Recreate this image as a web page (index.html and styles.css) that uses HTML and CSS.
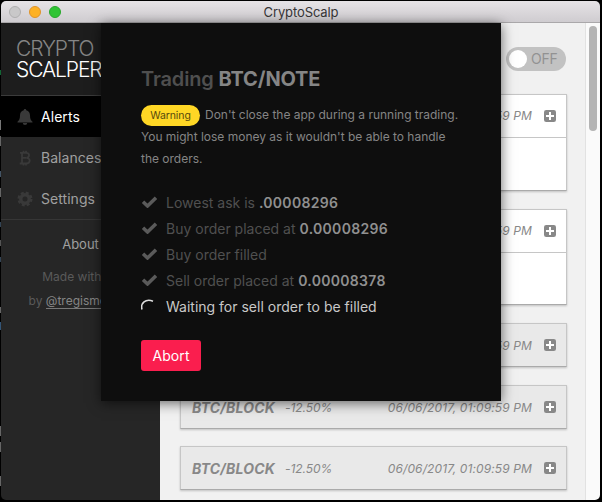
FILE: index.html
```html
<!DOCTYPE html>
<html lang="en">
<head>
<meta charset="utf-8">
<title>CryptoScalp</title>
<link rel="stylesheet" href="styles.css">
</head>
<body>
<svg class="defs" aria-hidden="true">
  <symbol id="check" viewBox="0 0 16 12"><path d="M1.500 5.700 6 10 14.500 1.700" fill="none" stroke="currentColor" stroke-width="3.500"/></symbol>
  <symbol id="plus" viewBox="0 0 12 12"><rect width="12" height="12" rx="2.2" fill="currentColor"/><path d="M6 2v8M2 6h8" stroke="#fff" stroke-width="2"/></symbol>
</svg>
<div class="window">
  <header class="titlebar">
    <div class="lights"><i class="light"></i><i class="light light-min"></i><i class="light light-max"></i></div>
    <span class="window-title">CryptoScalp</span>
  </header>
  <div class="body">
    <aside class="sidebar">
      <div class="logo"><span class="logo-top">CRYPTO</span><span>SCALPER</span></div>
      <nav class="nav">
        <a class="nav-item active"><svg class="nav-icon" viewBox="0 0 16 16"><path d="M8 0c.7 0 1.200.5 1.200 1.200C12 1.800 13 4 13 6.500c0 3.500 1 5 2.500 6.300v.7H.5v-.7C2 11.500 3 10 3 6.500 3 4 4 1.800 6.800 1.200 6.800.5 7.300 0 8 0zM5.800 14h4.400a2.200 2 0 0 1-4.400 0z" fill="currentColor"/></svg><span>Alerts</span></a>
        <a class="nav-item"><svg class="nav-icon" viewBox="0 0 16 16"><path d="M3 2.800h6c4 0 4 4.600.3 5 4.700.2 4.500 5.700-.3 5.700H2.700M5 3v10.500M5 7.900h4M6.500.8v2M9 .8v2M6.500 13.500v2M9 13.500v2" fill="none" stroke="currentColor" stroke-width="1.800"/></svg><span>Balances</span></a>
        <a class="nav-item"><svg class="nav-icon" viewBox="0 0 16 16"><circle cx="8" cy="8" r="4.200" fill="none" stroke="currentColor" stroke-width="3.400"/><circle cx="8" cy="8" r="6.200" fill="none" stroke="currentColor" stroke-width="2.600" stroke-dasharray="2.870 2"/></svg><span>Settings</span></a>
      </nav>
      <footer class="about">
        <a class="about-link">About</a>
        <p class="made">Made with <span class="heart">♥</span></p>
        <p class="made made-by">by <a class="author">@tregismoreira</a></p>
      </footer>
    </aside>
    <main class="main">
      <div class="toolbar"><div class="toggle"><i class="knob"></i><span>OFF</span></div></div>
      <section class="cards">
        <article class="card open"><div class="card-head"><time>06/06/2017, 01:09:59 PM</time><svg class="plus"><use href="#plus"/></svg></div></article>
        <article class="card open second"><div class="card-head"><time>06/06/2017, 01:09:59 PM</time><svg class="plus"><use href="#plus"/></svg></div></article>
        <article class="card"><div class="card-head"><time>06/06/2017, 01:09:59 PM</time><svg class="plus"><use href="#plus"/></svg></div></article>
        <article class="card"><div class="card-head"><b>BTC/BLOCK</b><span class="change">-12.50%</span><time>06/06/2017, 01:09:59 PM</time><svg class="plus"><use href="#plus"/></svg></div></article>
        <article class="card last"><div class="card-head"><b>BTC/BLOCK</b><span class="change">-12.50%</span><time>06/06/2017, 01:09:59 PM</time><svg class="plus"><use href="#plus"/></svg></div></article>
      </section>
    </main>
    <div class="scrollbar"><div class="thumb"></div></div>
    <div class="modal">
      <h1 class="modal-title">Trading <b>BTC/NOTE</b></h1>
      <p class="notice"><span class="badge">Warning</span>Don't close the app during a running trading.<br>You might lose money as it wouldn't be able to handle<br>the orders.</p>
      <ul class="steps">
        <li><svg class="check"><use href="#check"/></svg><span>Lowest ask is <b>.00008296</b></span></li>
        <li><svg class="check"><use href="#check"/></svg><span>Buy order placed at <b>0.00008296</b></span></li>
        <li><svg class="check"><use href="#check"/></svg><span>Buy order filled</span></li>
        <li><svg class="check"><use href="#check"/></svg><span>Sell order placed at <b>0.00008378</b></span></li>
        <li class="waiting"><svg class="spinner" viewBox="0 0 16 16"><path d="M1 11.500C-.7 5.500 4.500 .2 12 3.200" fill="none" stroke="currentColor" stroke-width="1.600"/></svg><span>Waiting for sell order to be filled</span></li>
      </ul>
      <button class="abort">Abort</button>
    </div>
  </div>
</div>
</body>
</html>
```

FILE: styles.css
```css
* { box-sizing: border-box; }
body {
  margin: 0;
  width: 602px;
  height: 502px;
  padding: 1px 2px 2px 1px;
  overflow: hidden;
  font-family: Inter, "Liberation Sans", sans-serif;
  background: linear-gradient(#000 0 70px, #163 70px 75px, #000 75px 120px, #777 120px 130px, #000 130px 136px, #666 136px 146px, #000 146px 171px, #456 171px 177px, #000 177px 188px, #666 188px 197px, #000 197px 222px, #345 222px 227px, #000 227px 240px, #555 240px 246px, #000 246px 257px, #345 257px 262px, #000 262px 307px, #666 307px 313px, #000 313px 322px, #357 322px 330px, #000 330px 426px, #666 426px 436px, #000 436px 442px, #666 442px 452px, #000 452px 476px, #666 476px 486px, #000 486px);
  background-size: 1px 502px;
  background-repeat: no-repeat;
  background-color: #000;
}
p, h1, ul { margin: 0; padding: 0; }
.defs { position: absolute; width: 0; height: 0; }
.window { width: 599px; height: 499px; border-radius: 5px; overflow: hidden; display: flex; flex-direction: column; }
.titlebar {
  height: 22px;
  flex: none;
  display: grid;
  grid-template-columns: 100px 1fr 100px;
  align-items: center;
  background: linear-gradient(#e6e3e6, #cfccd0);
  border-bottom: 1px solid #aaa8aa;
}
.lights { display: flex; gap: 8px; padding-left: 8px; }
.light { width: 12px; height: 12px; border-radius: 50%; background: #c9c8c9; border: 1px solid #b0afb0; }
.light-min { background: #fdb124; border-color: #df932a; }
.light-max { background: #30c435; border-color: #28a72c; }
.window-title { padding-left: 1px; text-align: center; font-size: 13px; letter-spacing: -.1px; color: #373637; }
.body { position: relative; flex: 1; display: flex; min-height: 0; }
.sidebar { width: 159px; flex: none; background: #262626; color: #a0a0a0; }
.logo { height: 73px; padding: 15px 0 0 15px; background: #1d1d1d; border-bottom: 1px solid #3b3b3b; display: flex; flex-direction: column; font-size: 21px; line-height: 21px; letter-spacing: -1.1px; font-weight: 300; color: #fff; }
.logo-top { color: #858585; }
.nav { border-bottom: 1px solid #363636; }
.nav-item { display: flex; align-items: center; height: 41px; padding-left: 16px; gap: 8px; font-size: 14px; letter-spacing: .05px; }
.nav-item.active { background: #000; color: #fff; }
.nav-icon { width: 16px; height: 16px; color: #393939; }
.about { text-align: center; font-size: 13px; }
.about-link { display: block; padding-top: 16px; line-height: 16px; }
.made { margin-top: 17px; line-height: 16px; font-size: 12px; color: #5a5a5a; }
.heart { display: inline-block; width: 14px; }
.made-by { margin-top: 8px; }
.author { color: #858585; border-bottom: 1px solid #777; }
.main { flex: 1; background: #f1f1f1; padding: 24px 18px 0 20px; }
.toolbar { display: flex; justify-content: flex-end; height: 47px; padding-right: 1px; }
.toggle { width: 60px; height: 24px; border-radius: 12px; background: #c2c2c2; display: flex; align-items: center; padding: 0 0 1px 3px; gap: 4px; font-size: 14px; letter-spacing: -.2px; color: #929292; }
.knob { width: 18px; height: 18px; border-radius: 50%; background: #fff; }
.cards { display: flex; flex-direction: column; gap: 18px; }
.card { height: 44px; flex: none; border: 1px solid #c6c6c6; border-bottom-color: #aaa; background: #e9e9e9; box-shadow: 0 1px 2px #0003; color: #888; }
.card.open { height: 97px; background: #fff; }
.card.second { height: 96px; }
.card.last { margin-top: -1px; }
.card-head { height: 43px; display: flex; align-items: center; padding: 0 10px 1px 11px; font-size: 14px; letter-spacing: .2px; font-style: italic; }
.open .card-head { border-bottom: 1px solid #c6c6c6; }
.change { margin-left: 10px; font-size: 12px; letter-spacing: -.05px; }
.card time { margin-left: auto; font-size: 12px; letter-spacing: .12px; }
.plus { width: 12px; height: 12px; margin-left: 12px; }
.scrollbar { width: 15px; flex: none; padding: 3px 0 0 3px; background: #fafafa; border-left: 1px solid #e2e2e2; }
.thumb { width: 8px; height: 105px; border-radius: 4px; background: #b4b4b4; }
.modal { position: absolute; left: 100px; top: 0; width: 400px; height: 378px; padding: 43px 40px 0; background: #0e0e0e; box-shadow: 0 2px 12px #0009; color: #858585; }
.modal-title { font-size: 20px; line-height: 26px; font-weight: 600; letter-spacing: -.15px; color: #4f4f4f; }
.modal-title b { font-weight: 700; color: #858585; }
.notice { margin-top: 12px; font-size: 12px; line-height: 22px; letter-spacing: -.01px; white-space: nowrap; }
.badge { display: inline-block; width: 59px; height: 21px; margin: 1px 5px 0 0; border-radius: 11px; background: #ffd725; color: #57490c; text-align: center; font-size: 10.5px; line-height: 21px; letter-spacing: -.1px; vertical-align: top; }
.steps { margin-top: 19px; list-style: none; font-size: 14px; color: #505050; }
.steps li { display: flex; align-items: center; gap: 8px; height: 26px; white-space: nowrap; }
.steps b { color: #909090; font-weight: 600; letter-spacing: .3px; }
.check { width: 17px; height: 12px; color: #5a5a5a; }
.steps .waiting { color: #c8c8c8; }
.spinner { width: 16px; height: 16px; margin-right: 1px; color: #ddd; }
.abort { display: block; margin-top: 21px; width: 60px; height: 31px; padding: 0; border: 0; border-radius: 3px; background: #fa1e4e; color: #fff; font: 14px Inter, "Liberation Sans", sans-serif; letter-spacing: .1px; }
```
